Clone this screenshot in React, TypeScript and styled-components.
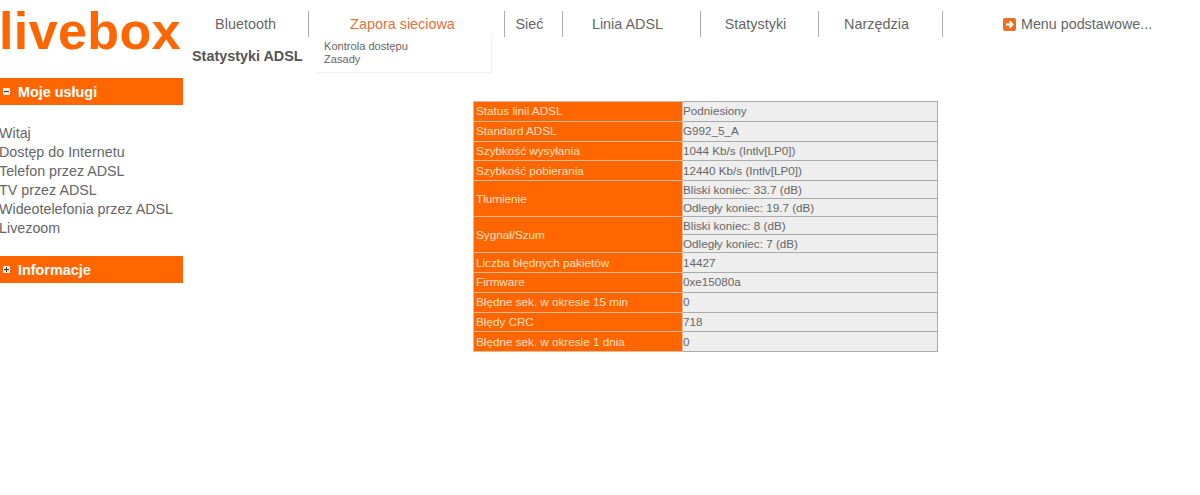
import styled, { createGlobalStyle } from "styled-components";

const GlobalStyle = createGlobalStyle`
  html, body {
    margin: 0;
    padding: 0;
    background: #fff;
    font-family: "Liberation Sans", Arial, sans-serif;
    overflow: hidden;
  }
`;

const Page = styled.div`
  display: flex;
  width: 1200px;
  height: 495px;
  overflow: hidden;
`;

const Sidebar = styled.aside`
  width: 183px;
  flex: none;
`;

const Logo = styled.div`
  height: 78px;
  margin-left: -1px;
  font-size: 52px;
  line-height: 62px;
  font-weight: 700;
  color: #ff6600;
  letter-spacing: 0.4px;
`;

const SectionHeader = styled.div`
  display: flex;
  align-items: center;
  gap: 8px;
  height: 27px;
  padding-left: 3px;
  background: #ff6600;
  color: #fff;
  font-size: 14.4px;
  font-weight: 700;
`;

const SectionIcon = styled.svg`
  width: 7px;
  height: 7px;
  flex: none;
`;

const LinkList = styled.ul`
  list-style: none;
  margin: 0;
  padding: 19px 0 18px;
`;

const LinkItem = styled.li`
  height: 19px;
  margin-left: -1px;
  font-size: 14.3px;
  line-height: 19px;
  color: #666;
`;

const Main = styled.main`
  flex: 1;
  position: relative;
`;

const Nav = styled.nav`
  display: flex;
  align-items: center;
  height: 26px;
  margin-top: 11px;
`;

const NavItem = styled.div<{ $width: number; $active?: boolean }>`
  width: ${(p) => p.$width}px;
  height: 26px;
  box-sizing: border-box;
  flex: none;
  padding-right: 8px;
  border-right: 1px solid #aaa;
  font-size: 14.4px;
  line-height: 27px;
  text-align: center;
  color: ${(p) => (p.$active ? "#e2703a" : "#666")};

  &:first-child {
    padding-right: 0;
  }
`;

const BasicMenu = styled.div`
  display: flex;
  align-items: center;
  gap: 5px;
  margin-left: 60px;
  font-size: 14.3px;
  line-height: 27px;
  color: #666;
`;

const ArrowIcon = styled.svg`
  width: 13px;
  height: 13px;
  flex: none;
`;

const PageTitle = styled.h1`
  margin: 11px 0 0 9px;
  font-size: 14.4px;
  line-height: 16px;
  font-weight: 700;
  color: #555;
`;

const Dropdown = styled.div`
  position: absolute;
  left: 134px;
  top: 34px;
  width: 175px;
  height: 39px;
  box-sizing: border-box;
  padding: 6px 7px;
  background: #fff;
  border-right: 1px solid #f0f0f0;
  border-bottom: 1px solid #f0f0f0;
  font-size: 11.1px;
  line-height: 13px;
  color: #666;
`;

const StatsTable = styled.table`
  margin: 37px 0 0 290px;
  width: 465px;
  table-layout: fixed;
  border-collapse: collapse;
  font-size: 11.7px;
`;

const LabelCell = styled.td`
  box-sizing: border-box;
  padding: 0 2px 1px;
  background: #ff6600;
  border: 1px solid #ddbb99;
  color: #ffe0c0;
`;

const ValueCell = styled.td<{ $short?: boolean }>`
  height: ${(p) => (p.$short ? 16 : 17.8)}px;
  padding: 0 0 1px;
  background: #eee;
  border: 1px solid #aaa;
  color: #666;
`;

const navItems = [
  { label: "Bluetooth", width: 126 },
  { label: "Zapora sieciowa", width: 196, active: true },
  { label: "Sieć", width: 58 },
  { label: "Linia ADSL", width: 138 },
  { label: "Statystyki", width: 118 },
  { label: "Narzędzia", width: 124 },
];

const services = [
  "Witaj",
  "Dostęp do Internetu",
  "Telefon przez ADSL",
  "TV przez ADSL",
  "Wideotelefonia przez ADSL",
  "Livezoom",
];

const stats = [
  { label: "Status linii ADSL", values: ["Podniesiony"] },
  { label: "Standard ADSL", values: ["G992_5_A"] },
  { label: "Szybkość wysyłania", values: ["1044 Kb/s (Intlv[LP0])"] },
  { label: "Szybkość pobierania", values: ["12440 Kb/s (Intlv[LP0])"] },
  { label: "Tłumienie", values: ["Bliski koniec: 33.7 (dB)", "Odległy koniec: 19.7 (dB)"] },
  { label: "Sygnał/Szum", values: ["Bliski koniec: 8 (dB)", "Odległy koniec: 7 (dB)"] },
  { label: "Liczba błędnych pakietów", values: ["14427"] },
  { label: "Firmware", values: ["0xe15080a"] },
  { label: "Błędne sek. w okresie 15 min", values: ["0"] },
  { label: "Błędy CRC", values: ["718"] },
  { label: "Błędne sek. w okresie 1 dnia", values: ["0"] },
];

const ToggleIcon = ({ open }: { open: boolean }) => (
  <SectionIcon viewBox="0 0 7 7">
    <rect width="7" height="7" rx="1" fill="#eee" />
    <rect x="1" y="3" width="5" height="1" fill="#333" />
    {!open && <rect x="3" y="1" width="1" height="5" fill="#333" />}
  </SectionIcon>
);

const App = () => (
  <>
    <GlobalStyle />
    <Page>
      <Sidebar>
        <Logo>livebox</Logo>
        <SectionHeader>
          <ToggleIcon open />
          Moje usługi
        </SectionHeader>
        <LinkList>
          {services.map((s) => (
            <LinkItem key={s}>{s}</LinkItem>
          ))}
        </LinkList>
        <SectionHeader>
          <ToggleIcon open={false} />
          Informacje
        </SectionHeader>
      </Sidebar>
      <Main>
        <Nav>
          {navItems.map((n) => (
            <NavItem key={n.label} $width={n.width} $active={n.active}>
              {n.label}
            </NavItem>
          ))}
          <BasicMenu>
            <ArrowIcon viewBox="0 0 13 13">
              <rect width="13" height="13" rx="2" fill="#e8701f" />
              <path d="M3 6.5h6M6.5 3.5l3 3-3 3" fill="none" stroke="#fff" strokeWidth="2" />
            </ArrowIcon>
            Menu podstawowe...
          </BasicMenu>
        </Nav>
        <PageTitle>Statystyki ADSL</PageTitle>
        <Dropdown>
          Kontrola dostępu
          <br />
          Zasady
        </Dropdown>
        <StatsTable>
          <colgroup>
            <col width="209" />
            <col />
          </colgroup>
          <tbody>
            {stats.flatMap((row) =>
              row.values.map((v, i) => (
                <tr key={row.label + i}>
                  {i === 0 && <LabelCell rowSpan={row.values.length}>{row.label}</LabelCell>}
                  <ValueCell $short={row.values.length > 1}>{v}</ValueCell>
                </tr>
              ))
            )}
          </tbody>
        </StatsTable>
      </Main>
    </Page>
  </>
);

export default App;
